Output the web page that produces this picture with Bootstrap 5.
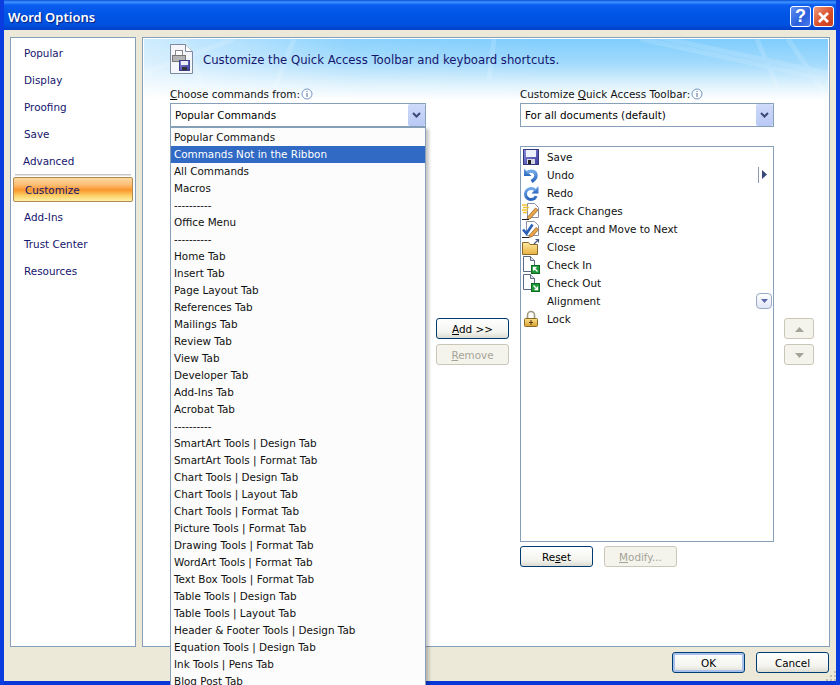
<!doctype html>
<html lang="en">
<head>
<title>Word Options</title>
<meta charset="utf-8">
<link href="https://cdn.jsdelivr.net/npm/bootstrap@5.3.3/dist/css/bootstrap.min.css" rel="stylesheet">
<style>
html, body { margin: 0; height: 100%; overflow: hidden; }
body { font-family: "DejaVu Sans", sans-serif; font-size: 10.4px; line-height: 13px; color: #000; background: #ece9d8; }
.win { width: 840px; height: 685px; position: relative; overflow: hidden; background: #ece9d8; border: solid #0a3ce0; border-width: 0 4px; }
.titlebar { height: 30px; margin: 0 -4px; padding: 6px 6px 0 8px; background: linear-gradient(#0a4bd8 0, #3d95ff 2px, #0a5df0 5px, #0055e5 14px, #0052e0 24px, #0040cc 30px); color: #fff; font-family: "Noto Sans", sans-serif; font-size: 13px; font-weight: 600; line-height: 22px; text-shadow: 1px 1px 1px #0a1f80; }
.caps { gap: 2px; }
.cap { width: 21px; height: 21px; border: 1px solid #fff; border-radius: 3px; font-family: "Liberation Sans", sans-serif; font-size: 18px; font-weight: 700; line-height: 19px; color: #fff; text-align: center; text-shadow: none; }
.cap-help { background: linear-gradient(135deg, #5f8ff0, #2a5fdc 60%, #4a7cf0); }
.cap-close { background: linear-gradient(135deg, #f09a7c, #d8502c 55%, #c93c1c); }
.content { height: 617px; padding: 7px 6px 0 6px; gap: 6px; }
.side { width: 126px; background: #fff; border: 1px solid #85a0b8; padding-top: 2px; }
.side .nav-link { height: 27px; padding: 7px 0 0 13px; color: #15156e; line-height: 13px; font-size: 10.4px; }
.side .adv { padding-left: 12px; height: 26px; }
.side .rule { height: 2px; margin: 0 4px 1px 4px; background: linear-gradient(#c8c8c8 50%, #e4e4e4 50%); }
.side .nav-link.active { width: 120px; margin: 0 0 2px 2px; height: 25px; padding: 6px 0 0 11px; border: 1px solid #b08a50; border-radius: 2px; background: linear-gradient(#fdd9a2 0, #fbbd74 30%, #f9962c 52%, #fdd36a 78%, #fff0a8 100%); color: #15156e; }
.main { width: 688px; background: #fff; border: 1px solid #85a0b8; position: relative; overflow: hidden; padding: 0 0 0 27px; }
.banner { position: absolute; left: 0; right: 0; top: 0; height: 62px; border: solid #fff; border-width: 1px 1px 0; background: linear-gradient(90deg, rgba(255,255,255,.62), rgba(255,255,255,.1) 30%, rgba(255,255,255,0) 60%), linear-gradient(#7fcdfd 0, #a2dafc 40%, #def2fd 75%, #fff 100%); }
.banner svg { position: absolute; left: 0; top: 0; }
.head { position: relative; height: 46px; padding-top: 6px; gap: 10px; }
.head span { color: #15156e; font-size: 11.7px; padding-top: 10px; }
.cols { position: relative; }
.col-l { width: 256px; }
.col-m { width: 73px; margin: 0 11px 0 10px; padding-top: 234px; }
.col-r { width: 254px; }
.col-b { width: 30px; margin-left: 10px; padding-top: 234px; }
.lbl { height: 19px; padding-top: 4px; white-space: nowrap; color: #111; }
.lbl svg { vertical-align: -2px; margin-left: 1px; }
.fake-select { height: 24px; border: 1px solid #85a0b8; background: #fff; padding-left: 4px; }
.arrow { width: 17px; height: 22px; border-radius: 2px; background: linear-gradient(#cfdafa, #b9c9f5); }
.qat { height: 396px; margin-top: 19px; border: 1px solid #85a0b8; background: #fff; position: relative; padding-top: 1px; }
.qat .list-group-item { height: 18px; padding: 0 0 0 1px; border: 0; background: transparent; gap: 7px; color: #111; font-size: 10.4px; line-height: 18px; border-radius: 0; }
.qat .ic { width: 18px; height: 18px; flex: none; }
.sub { position: absolute; right: 6px; top: 20px; height: 16px; border-left: 1px solid #8a9bb0; padding: 3px 0 0 3px; width: 9px; }
.sub svg { display: block; }
.drop { position: absolute; right: 1px; top: 146px; width: 16px; height: 16px; border: 1px solid #9aa9c4; border-radius: 4px; background: linear-gradient(#fff, #dfe6f6); }
.xbtn { width: 73px; height: 21px; padding: 0; font-size: 10.4px; line-height: 18px; color: #000; border: 1px solid #003c74; border-radius: 3px; background: linear-gradient(#fff, #f3f3ee 70%, #dcdcd2); --bs-btn-disabled-opacity: 1; }
.xbtn:disabled { color: #a5a597; border-color: #cbc7b8; background: #f4f3ec; }
.btn-row { margin-top: 4px; gap: 11px; }
.stack { display: flex; flex-direction: column; gap: 5px; }
.stack .sm { width: 30px; background: #f4f3ec; border-color: #cbc7b8; }
.foot { height: 34px; padding: 5px 7px 0 0; gap: 11px; position: relative; }
.ok { box-shadow: inset 0 0 0 2px #a8c0ee; }
.grip { position: absolute; right: 0; bottom: 0; }
.bottom-edge { height: 4px; margin: 0 -4px; background: #0837d8; }
.dropdown-menu.cmds { display: block; position: absolute; left: 166px; top: 127px; width: 256px; height: 560px; padding: 1px 0 0 0; margin: 0; border: 1px solid #85a0b8; border-radius: 0; background: #fcfcfc; overflow: hidden; font-size: 10.4px; min-width: 0; box-shadow: 3px 2px 3px rgba(0,0,0,.22); }
.cmds .dropdown-item { height: 17px; line-height: 17px; padding: 0 0 0 3px; color: #111; white-space: nowrap; }
.cmds .dropdown-item.active { background: #316ac5; color: #fff; }
</style>
</head>
<body>
<div class="win d-flex flex-column">
  <svg width="0" height="0" class="position-absolute">
    <defs>
      <linearGradient id="blueArrow" x1="0" y1="0" x2="0" y2="1"><stop offset="0" stop-color="#6fa8e8"/><stop offset="1" stop-color="#2a66bc"/></linearGradient>
      <linearGradient id="floppy" x1="0" y1="0" x2="1" y2="1"><stop offset="0" stop-color="#8a8ce0"/><stop offset="1" stop-color="#3a3c98"/></linearGradient>
      <linearGradient id="folder" x1="0" y1="0" x2="0" y2="1"><stop offset="0" stop-color="#fdeaa0"/><stop offset="1" stop-color="#e8b040"/></linearGradient>
      <linearGradient id="goldLock" x1="0" y1="0" x2="0" y2="1"><stop offset="0" stop-color="#fbe08a"/><stop offset="1" stop-color="#d8a030"/></linearGradient>
    </defs>
  </svg>
  <div class="titlebar d-flex align-items-start justify-content-between">
    <span>Word Options</span>
    <div class="caps d-flex">
      <div class="cap cap-help">?</div>
      <div class="cap cap-close">
        <svg width="15" height="15" viewBox="0 0 15 15"><path d="M3 3l9 9M12 3l-9 9" stroke="#fff" stroke-width="2.6"/></svg>
      </div>
    </div>
  </div>

  <div class="content d-flex">
    <nav class="side nav flex-column flex-nowrap">
      <a class="nav-link" href="#">Popular</a>
      <a class="nav-link" href="#">Display</a>
      <a class="nav-link" href="#">Proofing</a>
      <a class="nav-link" href="#">Save</a>
      <a class="nav-link adv" href="#">Advanced</a>
      <div class="rule"></div>
      <a class="nav-link active" href="#">Customize</a>
      <a class="nav-link" href="#">Add-Ins</a>
      <a class="nav-link" href="#">Trust Center</a>
      <a class="nav-link" href="#">Resources</a>
    </nav>

    <div class="main">
      <div class="banner">
        <svg width="686" height="62"><path d="M497 0L700 44M505 -4L700 38M613 0L634 50M644 0L682 56" stroke="#fff" stroke-opacity=".14" stroke-width="5" fill="none"/><path d="M0 34L90 0M40 0L60 50M150 0L130 50M350 0L345 40" stroke="#fff" stroke-opacity=".14" stroke-width="5" fill="none"/></svg>
      </div>
      <div class="head d-flex">
        <svg width="23" height="30" viewBox="0 0 23 30"><path d="M.5.5h15l7 7v22H.5z" fill="#f4f6fb" stroke="#7d8aa0"/><path d="M15.5.5v7h7" fill="#fff" stroke="#7d8aa0"/><rect x="5.5" y="6.5" width="7" height="5" fill="#fff" stroke="#888"/><rect x="2.5" y="11.5" width="13" height="6" fill="#b4b4b4" stroke="#777"/><rect x="9.5" y="16.5" width="10" height="10" fill="url(#floppy)" stroke="#3a3f88"/><rect x="11" y="17" width="7" height="4" fill="#eeeef8"/><rect x="12" y="23" width="5" height="3" fill="#333"/></svg>
        <span>Customize the Quick Access Toolbar and keyboard shortcuts.</span>
      </div>
      <div class="cols d-flex">
        <div class="col-l">
          <div class="lbl"><u>C</u>hoose commands from:<svg width="12" height="12" viewBox="0 0 12 12"><circle cx="6" cy="6" r="5" fill="#fff" fill-opacity=".5" stroke="#7a96c0"/><path d="M6 5v4M6 3v1" stroke="#5a6a90"/></svg></div>
          <div class="fake-select d-flex align-items-center justify-content-between">
            <span>Popular Commands</span>
            <div class="arrow d-flex align-items-center justify-content-center"><svg width="9" height="7" viewBox="0 0 9 7"><path d="M1 1l3.5 3.5L8 1" fill="none" stroke="#3a4a78" stroke-width="2"/></svg></div>
          </div>
        </div>
        <div class="col-m stack">
          <button class="btn xbtn"><u>A</u>dd &gt;&gt;</button>
          <button class="btn xbtn" disabled><u>R</u>emove</button>
        </div>
        <div class="col-r">
          <div class="lbl">Customize <u>Q</u>uick Access Toolbar:<svg width="12" height="12" viewBox="0 0 12 12"><circle cx="6" cy="6" r="5" fill="#fff" fill-opacity=".5" stroke="#7a96c0"/><path d="M6 5v4M6 3v1" stroke="#5a6a90"/></svg></div>
          <div class="fake-select d-flex align-items-center justify-content-between">
            <span>For all documents (default)</span>
            <div class="arrow d-flex align-items-center justify-content-center"><svg width="9" height="7" viewBox="0 0 9 7"><path d="M1 1l3.5 3.5L8 1" fill="none" stroke="#3a4a78" stroke-width="2"/></svg></div>
          </div>
          <div class="qat">
            <div class="list-group list-group-flush">
              <div class="list-group-item d-flex"><svg class="ic" viewBox="0 0 18 18"><rect x="1.5" y="1.5" width="15" height="15" fill="url(#floppy)" stroke="#34367e"/><rect x="4" y="2" width="10" height="7" fill="#eef0fa"/><rect x="5" y="11" width="8" height="5" fill="#d8d8e4"/><rect x="6" y="12" width="3" height="4" fill="#222"/></svg>Save</div>
              <div class="list-group-item d-flex"><svg class="ic" viewBox="0 0 18 18"><path d="M2 2.5V10h7.5z" fill="url(#blueArrow)"/><path d="M5 6.5c4-2.5 9-1.5 9 3 0 2.5-2 4.5-4.5 6" fill="none" stroke="url(#blueArrow)" stroke-width="3.4"/></svg>Undo</div>
              <div class="list-group-item d-flex"><svg class="ic" viewBox="0 0 18 18"><path d="M16.5 2v7.5h-7z" fill="url(#blueArrow)"/><path d="M13.5 6.5c-1-1.5-2.5-2-4-2-3.500 0-6 2.5-6 5.5 0 3 2.5 5.5 5.5 5.5 2.5 0 4.500-1.500 5-3.500" fill="none" stroke="url(#blueArrow)" stroke-width="3"/></svg>Redo</div>
              <div class="list-group-item d-flex"><svg class="ic" viewBox="0 0 18 18"><path d="M5.500 1.500h7l4 4v10h-11z" fill="#fff" stroke="#8a90a4"/><path d="M0 3h5M1 5.500h6M0 8h6M1 10.500h4" stroke="#f4c430" stroke-width="1.6"/><path d="M6 14.500l7.500-8.500 2.500 2-7.500 8.500-3.500 1z" fill="#eaa54a" stroke="#8a5a20" stroke-width=".7"/><path d="M0 17.500h7" stroke="#222"/></svg>Track Changes</div>
              <div class="list-group-item d-flex"><svg class="ic" viewBox="0 0 18 18"><path d="M4.500 1.500h8l4 4v10h-12z" fill="#fff" stroke="#8a90a4"/><path d="M1 9.500l3.500 4 6-9" fill="none" stroke="#2a5fb8" stroke-width="2.6"/><path d="M8 14.500l6-7 2.500 2-6 7-3.500 1z" fill="#eaa54a" stroke="#8a5a20" stroke-width=".7"/><path d="M0 17.500h7" stroke="#222"/></svg>Accept and Move to Next</div>
              <div class="list-group-item d-flex"><svg class="ic" viewBox="0 0 18 18"><path d="M.5 4.500h6l1.500 2h7.500v10H.5z" fill="url(#folder)" stroke="#8a6a2a"/><path d="M12 6l4-4M13.500 1.500h3v3" fill="none" stroke="#4a5a80" stroke-width="1.2"/></svg>Close</div>
              <div class="list-group-item d-flex"><svg class="ic" viewBox="0 0 18 18"><path d="M1.500.5h7l4 4v11h-11z" fill="#fff" stroke="#5a6a84"/><path d="M8.500.5v4h4" fill="#dde" stroke="#5a6a84"/><rect x="9.500" y="9.500" width="8" height="8" fill="#1f9a3a" stroke="#0f6a20"/><path d="M15.500 15.500l-4-4M11.500 14.500v-3h3" fill="none" stroke="#fff" stroke-width="1.3"/></svg>Check In</div>
              <div class="list-group-item d-flex"><svg class="ic" viewBox="0 0 18 18"><path d="M1.500.5h7l4 4v11h-11z" fill="#fff" stroke="#5a6a84"/><path d="M8.500.5v4h4" fill="#dde" stroke="#5a6a84"/><rect x="9.500" y="9.500" width="8" height="8" fill="#1f9a3a" stroke="#0f6a20"/><path d="M11.500 11.500l4 4M15.500 12.500v3h-3" fill="none" stroke="#fff" stroke-width="1.3"/></svg>Check Out</div>
              <div class="list-group-item d-flex"><span class="ic"></span>Alignment</div>
              <div class="list-group-item d-flex"><svg class="ic" viewBox="0 0 18 18"><path d="M5.500 8V5a3.500 3.500 0 0 1 7 0v3" fill="none" stroke="#a09880" stroke-width="1.6"/><rect x="2.500" y="8.500" width="13" height="8" rx="1" fill="url(#goldLock)" stroke="#8a6a20"/><path d="M9 10v5M7 12.500h4" stroke="#5a3a10"/></svg>Lock</div>
            </div>
            <div class="sub"><svg width="5" height="9" viewBox="0 0 5 9"><path d="M0 0l5 4.500L0 9z" fill="#3a4a78"/></svg></div>
            <div class="drop d-flex align-items-center justify-content-center"><svg width="7" height="4" viewBox="0 0 7 4"><path d="M0 0h7L3.500 4z" fill="#5a6ab0"/></svg></div>
          </div>
          <div class="btn-row d-flex">
            <button class="btn xbtn">Re<u>s</u>et</button>
            <button class="btn xbtn" disabled><u>M</u>odify...</button>
          </div>
        </div>
        <div class="col-b stack">
          <button class="btn xbtn sm" disabled><svg width="9" height="5" viewBox="0 0 9 5"><path d="M0 5h9L4.500 0z" fill="#a5a597"/></svg></button>
          <button class="btn xbtn sm" disabled><svg width="9" height="5" viewBox="0 0 9 5"><path d="M0 0h9L4.500 5z" fill="#a5a597"/></svg></button>
        </div>
      </div>
    </div>
  </div>

  <div class="foot d-flex justify-content-end">
    <button class="btn xbtn ok">OK</button>
    <button class="btn xbtn">Cancel</button>
    <svg class="grip" width="11" height="11" viewBox="0 0 11 11"><path d="M9 1h2v2H9zM5 5h2v2H5zM9 5h2v2H9zM1 9h2v2H1zM5 9h2v2H5zM9 9h2v2H9z" fill="#c2bfae"/></svg>
  </div>
  <div class="bottom-edge"></div>

  <div class="dropdown-menu cmds show">
    <a class="dropdown-item" href="#">Popular Commands</a>
    <a class="dropdown-item active" href="#">Commands Not in the Ribbon</a>
    <a class="dropdown-item" href="#">All Commands</a>
    <a class="dropdown-item" href="#">Macros</a>
    <a class="dropdown-item" href="#">----------</a>
    <a class="dropdown-item" href="#">Office Menu</a>
    <a class="dropdown-item" href="#">----------</a>
    <a class="dropdown-item" href="#">Home Tab</a>
    <a class="dropdown-item" href="#">Insert Tab</a>
    <a class="dropdown-item" href="#">Page Layout Tab</a>
    <a class="dropdown-item" href="#">References Tab</a>
    <a class="dropdown-item" href="#">Mailings Tab</a>
    <a class="dropdown-item" href="#">Review Tab</a>
    <a class="dropdown-item" href="#">View Tab</a>
    <a class="dropdown-item" href="#">Developer Tab</a>
    <a class="dropdown-item" href="#">Add-Ins Tab</a>
    <a class="dropdown-item" href="#">Acrobat Tab</a>
    <a class="dropdown-item" href="#">----------</a>
    <a class="dropdown-item" href="#">SmartArt Tools | Design Tab</a>
    <a class="dropdown-item" href="#">SmartArt Tools | Format Tab</a>
    <a class="dropdown-item" href="#">Chart Tools | Design Tab</a>
    <a class="dropdown-item" href="#">Chart Tools | Layout Tab</a>
    <a class="dropdown-item" href="#">Chart Tools | Format Tab</a>
    <a class="dropdown-item" href="#">Picture Tools | Format Tab</a>
    <a class="dropdown-item" href="#">Drawing Tools | Format Tab</a>
    <a class="dropdown-item" href="#">WordArt Tools | Format Tab</a>
    <a class="dropdown-item" href="#">Text Box Tools | Format Tab</a>
    <a class="dropdown-item" href="#">Table Tools | Design Tab</a>
    <a class="dropdown-item" href="#">Table Tools | Layout Tab</a>
    <a class="dropdown-item" href="#">Header &amp; Footer Tools | Design Tab</a>
    <a class="dropdown-item" href="#">Equation Tools | Design Tab</a>
    <a class="dropdown-item" href="#">Ink Tools | Pens Tab</a>
    <a class="dropdown-item" href="#">Blog Post Tab</a>
  </div>
</div>
</body>
</html>
